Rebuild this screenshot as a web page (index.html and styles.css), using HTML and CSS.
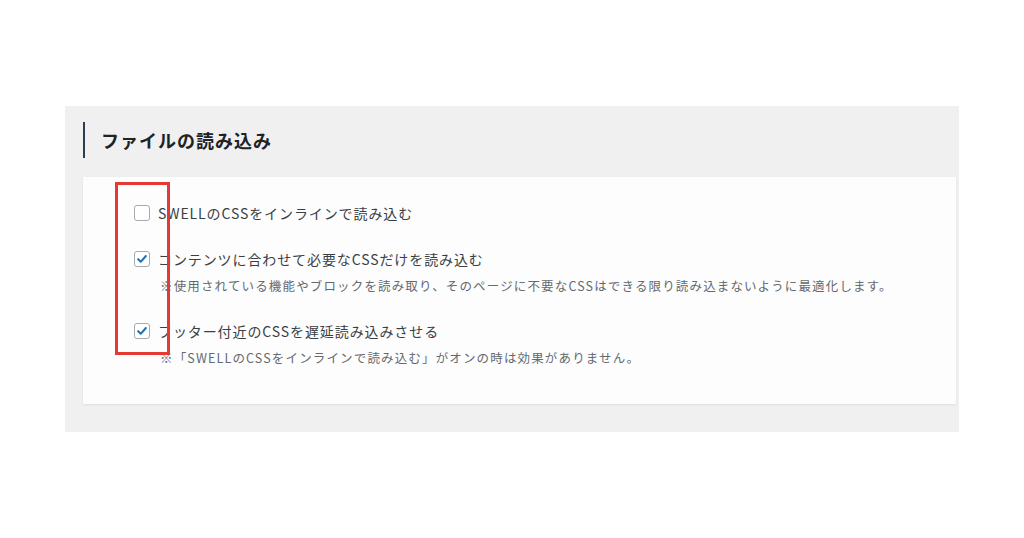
FILE: index.html
```html
<!DOCTYPE html>
<html lang="ja">
<head>
<meta charset="utf-8">
<link rel="stylesheet" href="styles.css">
</head>
<body>
<div class="panel">
  <h2 class="heading">ファイルの読み込み</h2>
  <div class="card">
    <div class="opt">
      <div class="row"><span class="cb"></span><span class="label">SWELLのCSSをインラインで読み込む</span></div>
    </div>
    <div class="opt">
      <div class="row"><span class="cb"><svg viewBox="0 0 16 16" width="16" height="16"><path d="M3.6 8.2 L6.6 11.2 L12.4 4.6" fill="none" stroke="#2271b1" stroke-width="2.3" stroke-linecap="round" stroke-linejoin="round"/></svg></span><span class="label">コンテンツに合わせて必要なCSSだけを読み込む</span></div>
      <p class="note">※使用されている機能やブロックを読み取り、そのページに不要なCSSはできる限り読み込まないように最適化します。</p>
    </div>
    <div class="opt">
      <div class="row"><span class="cb"><svg viewBox="0 0 16 16" width="16" height="16"><path d="M3.6 8.2 L6.6 11.2 L12.4 4.6" fill="none" stroke="#2271b1" stroke-width="2.3" stroke-linecap="round" stroke-linejoin="round"/></svg></span><span class="label">フッター付近のCSSを遅延読み込みさせる</span></div>
      <p class="note">※「SWELLのCSSをインラインで読み込む」がオンの時は効果がありません。</p>
    </div>
    <div class="mark"></div>
  </div>
</div>
</body>
</html>
```
FILE: styles.css
```css
* { box-sizing: border-box; }
body {
  margin: 0;
  background: #ffffff;
  font-family: "Noto Sans CJK JP", "Noto Sans", sans-serif;
  color: #3c434a;
}
.panel {
  margin: 106px 0 0 65px;
  width: 894px;
  height: 326px;
  background: #f0f0f0;
  padding: 16px 0 0 18px;
}
.heading {
  margin: 0;
  height: 36px;
  border-left: 2px solid #2c3e50;
  padding-left: 16px;
  display: flex;
  align-items: center;
  font-size: 18px;
  font-weight: 700;
  letter-spacing: 1px;
  color: #1d2327;
}
.card {
  position: relative;
  margin-top: 19px;
  width: 873px;
  height: 227px;
  background: #fdfdfd;
  box-shadow: 0 1px 2px rgba(0,0,0,0.08);
  padding: 26px 0 0 51px;
  display: flex;
  flex-direction: column;
  gap: 26px;
}
.row {
  display: flex;
  align-items: center;
  height: 20px;
}
.cb {
  width: 16px;
  height: 16px;
  border: 1px solid #a7aaad;
  border-radius: 3px;
  background: #fff;
  margin-right: 8px;
  display: flex;
  align-items: center;
  justify-content: center;
  flex: none;
}
.cb svg { display: block; }
.label {
  font-size: 14px;
  letter-spacing: 0.9px;
  color: #3a3f44;
  white-space: nowrap;
}
.note {
  margin: 8px 0 0 26px;
  height: 18px;
  line-height: 18px;
  font-size: 12.5px;
  letter-spacing: 1.15px;
  color: #646970;
  white-space: nowrap;
}
.mark {
  position: absolute;
  left: 32px;
  top: 5px;
  width: 55px;
  height: 173px;
  border: 3px solid #e53935;
}
```
